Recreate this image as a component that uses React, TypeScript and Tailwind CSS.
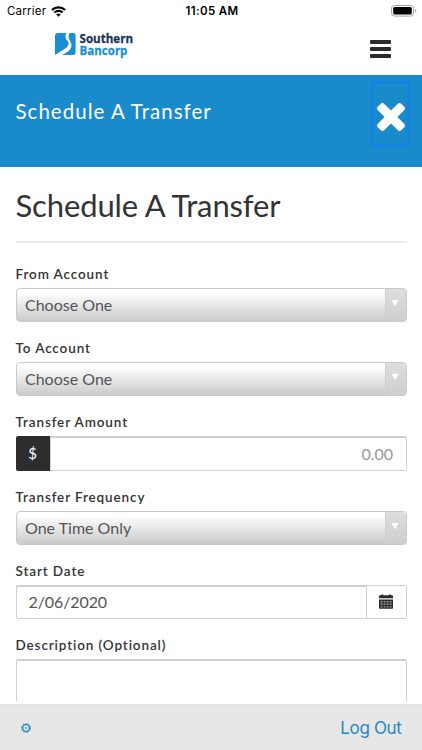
import React from "react";

interface FieldProps {
    label: string;
    children: React.ReactNode;
}

interface SelectProps {
    value: string;
}

const StatusBar: React.FC = () => {
    return (
        <div className="flex h-[22px] shrink-0 items-center justify-between pr-[5px] pl-[7px] font-['Inter',sans-serif] text-[11.5px] leading-[22px] text-black">
            <div className="flex w-[110px] items-center gap-[5px]">
                <span className="tracking-[0.22px]">Carrier</span>
                <svg className="h-[11px] w-[15px]" viewBox="0 0 15 11" fill="none" stroke="#000" strokeWidth="2.1">
                    <path d="M0.9 4.1a9.4 9.4 0 0 1 13.2 0" />
                    <path d="M3.3 6.6a6 6 0 0 1 8.4 0" />
                    <path d="M7.5 10.8 5.2 8.5a3.3 3.3 0 0 1 4.6 0z" fill="#000" stroke="none" />
                </svg>
            </div>
            <span className="font-semibold tracking-[0.35px]">11:05 AM</span>
            <div className="flex w-[110px] justify-end">
                <svg className="h-[12px] w-[26px]" viewBox="0 0 26 12">
                    <rect x="0.5" y="0.5" width="22" height="10.6" rx="3" fill="none" stroke="#a3a3a3" />
                    <rect x="2.2" y="2.1" width="18.6" height="7.4" rx="1.5" fill="#000" />
                    <path d="M24 4q1.4 .6 1.4 1.8t-1.4 1.8z" fill="#a3a3a3" />
                </svg>
            </div>
        </div>
    );
};

const Logo: React.FC = () => {
    return (
        <svg className="h-[38px] w-[84px]" viewBox="0 -6 84 38">
            <path d="M4 3h8.6c-2 3.4-1.2 5.4.7 7.6 2.2 2.6 1.6 4.9-1.2 7.5L1 25V6a3 3 0 0 1 3-3z" fill="#1a8fd6" />
            <path d="M15.5 3H19a2.6 2.6 0 0 1 2.6 2.6V22a3 3 0 0 1-3 3H7.6c5.4-2.4 9.8-5.6 9.9-9.6 0-4.4-4.8-6.8-2-12.4z" fill="#1a8fd6" />
            <text x="25.6" y="13.2" textLength="53.4" lengthAdjust="spacingAndGlyphs" fontSize="13" fontWeight="700" fontFamily="'Open Sans', sans-serif" fill="#17375e" stroke="#17375e" strokeWidth="0.3">
                Southern
            </text>
            <text x="25.6" y="25.2" textLength="47.8" lengthAdjust="spacingAndGlyphs" fontSize="13" fontWeight="700" fontFamily="'Open Sans', sans-serif" fill="#1a8fd6" stroke="#1a8fd6" strokeWidth="0.3">
                Bancorp
            </text>
        </svg>
    );
};

const Field: React.FC<FieldProps> = ({ label, children }) => {
    return (
        <div className="flex h-[74.35px] shrink-0 flex-col">
            <label className="h-[24px] shrink-0 text-[13.5px] leading-[20px] font-semibold tracking-[0.88px] text-[#333]">
                {label}
            </label>
            {children}
        </div>
    );
};

const Select: React.FC<SelectProps> = ({ value }) => {
    return (
        <div className="flex h-[34.5px] overflow-hidden rounded-[4px] border border-[#cacaca] bg-linear-to-b from-white from-10% to-[#cbcbcb]">
            <span className="flex-1 pl-[8.5px] text-[16px] leading-[32px] text-[#555]">{value}</span>
            <span className="flex w-[21px] justify-center border-l border-[#cfcfcf] bg-linear-to-b from-[#dedede] to-[#cecece] pt-[11px] pr-[2px]">
                <svg className="h-[7px] w-[8px]" viewBox="0 0 8 7">
                    <path d="M0.5 0h7L4 6.5z" fill="#fff" />
                </svg>
            </span>
        </div>
    );
};

const CalendarIcon: React.FC = () => {
    return (
        <svg className="h-[15px] w-[14px]" viewBox="0 0 14 15">
            <path d="M0 4.3V2.3q0-1 1-1h1.2V.4h2v.9h5.6V.4h2v.9H13q1 0 1 1v2z" fill="#2b2b2b" />
            <path d="M0 5.4h14V14q0 .8-.8.8H.8Q0 14.8 0 14z" fill="#2b2b2b" />
            <path
                d="M1.6 7h1.9v1.4H1.6zM4.6 7h1.9v1.4H4.6zM7.6 7h1.9v1.4H7.6zM10.6 7h1.9v1.4H10.6zM1.6 9.6h1.9v1.4H1.6zM4.6 9.6h1.9v1.4H4.6zM7.6 9.6h1.9v1.4H7.6zM10.6 9.6h1.9v1.4H10.6zM1.6 12.2h1.9v1.4H1.6zM4.6 12.2h1.9v1.4H4.6zM7.6 12.2h1.9v1.4H7.6zM10.6 12.2h1.9v1.4H10.6z"
                fill="#999"
            />
        </svg>
    );
};

const App: React.FC = () => {
    return (
        <div className="flex h-[750px] w-[422px] flex-col overflow-hidden bg-white font-['Lato',sans-serif]">
            <StatusBar />

            <header className="flex h-[52.5px] shrink-0 items-start justify-between pr-[31px] pl-[54px]">
                <div className="pt-[2px]">
                    <Logo />
                </div>
                <button className="flex flex-col gap-[3px] pt-[18px]">
                    <span className="h-[4px] w-[21px] rounded-[1px] bg-[#2b2b2f]" />
                    <span className="h-[4px] w-[21px] rounded-[1px] bg-[#2b2b2f]" />
                    <span className="h-[4px] w-[21px] rounded-[1px] bg-[#2b2b2f]" />
                </button>
            </header>

            <div className="flex h-[92.5px] shrink-0 justify-between bg-[#1a8bca] pr-[12px] pl-[15.5px]">
                <h2 className="pt-[23px] text-[20.5px] leading-[26px] tracking-[1.02px] text-white">
                    Schedule A Transfer
                </h2>
                <button className="mt-[6.5px] flex h-[66px] w-[39px] items-center justify-center border-[3px] border-[#1283e2] pt-[5px]">
                    <svg className="h-[28px] w-[28px] shrink-0" viewBox="302 366 1188 1188" fill="#fff">
                        <path d="M1490 1322q0 40-28 68l-136 136q-28 28-68 28t-68-28l-294-294-294 294q-28 28-68 28t-68-28l-136-136q-28-28-28-68t28-68l294-294-294-294q-28-28-28-68t28-68l136-136q28-28 68-28t68 28l294 294 294-294q28-28 68-28t68 28l136 136q28 28 28 68t-28 68l-294 294 294 294q28 28 28 68z" />
                    </svg>
                </button>
            </div>

            <main className="flex h-[534px] shrink-0 flex-col overflow-hidden px-[15.5px]">
                <h1 className="mb-[21px] h-[75.5px] shrink-0 border-b-2 border-[#ededed] pt-[18px] text-[31px] leading-[40px] tracking-[-0.13px] text-[#333]">
                    Schedule A Transfer
                </h1>

                <Field label="From Account">
                    <Select value="Choose One" />
                </Field>
                <Field label="To Account">
                    <Select value="Choose One" />
                </Field>
                <Field label="Transfer Amount">
                    <div className="flex h-[34.5px]">
                        <span className="w-[34px] rounded-l-[2px] bg-[#2d2d2d] text-center text-[15px] leading-[34px] text-white">$</span>
                        <div className="flex-1 rounded-r-[2px] border border-t-2 border-[#cfcfcf] pr-[12.5px] text-right text-[16px] leading-[31px] text-[#999]">
                            0.00
                        </div>
                    </div>
                </Field>
                <Field label="Transfer Frequency">
                    <Select value="One Time Only" />
                </Field>
                <Field label="Start Date">
                    <div className="flex h-[34.5px]">
                        <div className="flex-1 rounded-l-[2px] border border-t-2 border-[#cfcfcf] pl-[12px] text-[16px] leading-[30px] tracking-[-0.1px] text-[#555]">
                            2/06/2020
                        </div>
                        <button className="flex w-[40px] justify-center rounded-r-[2px] border border-l-0 border-[#cfcfcf] pt-[8px]">
                            <CalendarIcon />
                        </button>
                    </div>
                </Field>
                <Field label="Description (Optional)">
                    <div className="h-[70px] shrink-0 rounded-[2px] border border-t-2 border-[#cfcfcf]" />
                </Field>
            </main>

            <footer className="mt-[3px] flex h-[46px] shrink-0 items-center justify-between border-t border-[#e2e2e2] bg-[#e7e7e7] pr-[20.5px] pl-[21px] text-[#2788c4]">
                <svg className="h-[10px] w-[10px]" viewBox="0 0 10 10" fill="none" stroke="currentColor">
                    <circle cx="5" cy="5" r="3.4" strokeWidth="1.3" />
                    <circle cx="5" cy="5" r="4.5" strokeWidth="1" strokeDasharray="1.6 1.227" />
                    <circle cx="5" cy="5" r="0.9" fill="currentColor" stroke="none" />
                </svg>
                <span className="font-['Inter',sans-serif] text-[17px] leading-[24px] tracking-[-0.35px]">Log Out</span>
            </footer>
        </div>
    );
};

export default App;
